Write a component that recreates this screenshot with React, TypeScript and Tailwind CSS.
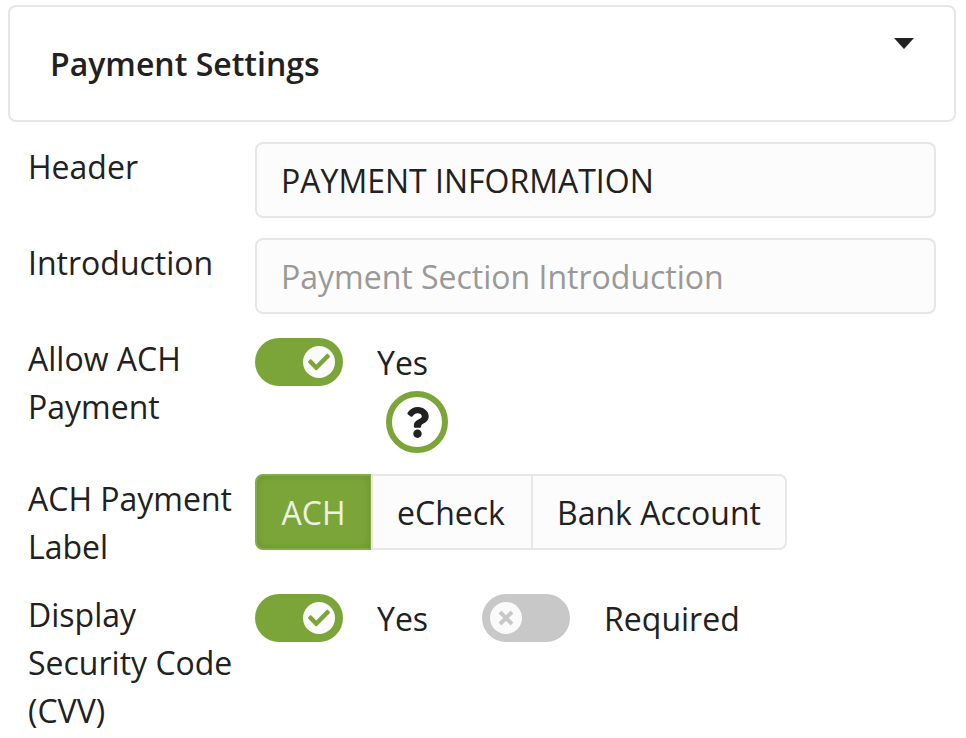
import React from 'react';
import { FaCheck, FaQuestion } from 'react-icons/fa';

const Toggle = ({ on }: { on: boolean }) => {
  if (on) {
    return (
      <div className="w-[88px] h-12 rounded-full bg-[#7ba539] flex items-center justify-end pr-2 shrink-0">
        <div className="w-8 h-8 rounded-full bg-[#fafafa] flex items-center justify-center">
          <FaCheck size={22} color="#7ba539" />
        </div>
      </div>
    );
  }
  return (
    <div className="w-[88px] h-12 rounded-full bg-[#c8c8c8] flex items-center pl-2 shrink-0">
      <div className="w-8 h-8 rounded-full bg-[#fafafa] flex items-center justify-center">
        <svg width="18" height="18" viewBox="0 0 18 18" fill="none">
          <path d="M3 3l12 12M15 3L3 15" stroke="#c8c8c8" strokeWidth="4" />
        </svg>
      </div>
    </div>
  );
};

const Label = ({ children }: { children: React.ReactNode }) => (
  <div className="w-[226px] shrink-0 pt-px">{children}</div>
);

const App = () => {
  return (
    <div className="w-[966px] h-[738px] overflow-hidden bg-white text-[32px] leading-[48px] text-[#212121] font-['Open_Sans',sans-serif]">
      <div className="ml-2 mr-2.5 mt-[5px] h-[117px] border-2 border-[#e6e6e6] rounded-lg flex justify-between pl-[40px] pr-[40px]">
        <div className="font-semibold mt-[33px]">Payment Settings</div>
        <div className="mt-[31px] w-0 h-0 border-x-[10px] border-x-transparent border-t-[11px] border-t-[#212121]" />
      </div>

      <div className="pl-[28px] pr-[30px] pt-5">
        {/* Header */}
        <div className="flex mb-5">
          <Label>Header</Label>
          <div className="ml-px flex-1 h-[76px] border-2 border-[#e6e6e6] rounded-lg bg-[#fcfcfc] px-[24px] pt-px flex items-center">
            PAYMENT INFORMATION
          </div>
        </div>

        {/* Introduction */}
        <div className="flex mb-5">
          <Label>Introduction</Label>
          <div className="ml-px flex-1 h-[76px] border-2 border-[#e6e6e6] rounded-lg bg-[#fcfcfc] px-[24px] pt-px flex items-center text-[#999999]">
            Payment Section Introduction
          </div>
        </div>

        {/* Allow ACH */}
        <div className="flex mb-[21px]">
          <Label>Allow ACH Payment</Label>
          <div className="ml-px pt-[4px]">
            <div className="flex items-start">
              <Toggle on />
              <span className="ml-[34px] mt-[1px]">Yes</span>
            </div>
            <div className="ml-[131px] mt-[4px] w-[62px] h-[62px] rounded-full border-[6px] border-[#7ba539] flex items-center justify-center">
              <FaQuestion size={31} color="#212121" />
            </div>
          </div>
        </div>

        {/* ACH label */}
        <div className="flex mb-[19px]">
          <Label>ACH Payment Label</Label>
          <div className="ml-px flex h-[76px] text-center">
            <div className="w-[117px] border-2 border-[#84ad44] rounded-l-lg bg-[#7ba539] text-[#ecf2e1] shadow-[inset_0_0_8px_rgba(0,0,0,0.12)] flex items-center justify-center pt-px">ACH</div>
            <div className="w-[162px] -ml-px border-2 border-[#e6e6e6] bg-[#fcfcfc] flex items-center justify-center pt-px pr-0.5">eCheck</div>
            <div className="w-[256px] -ml-0.5 border-2 border-[#e6e6e6] rounded-r-lg bg-[#fcfcfc] flex items-center justify-center pt-px">Bank Account</div>
          </div>
        </div>

        {/* CVV */}
        <div className="flex">
          <Label>Display Security Code (CVV)</Label>
          <div className="ml-px flex items-start pt-[4px]">
            <Toggle on />
            <span className="ml-[34px] mt-[1px]">Yes</span>
            <div className="ml-[54px]"><Toggle on={false} /></div>
            <span className="ml-[34px] mt-[1px]">Required</span>
          </div>
        </div>
      </div>
    </div>
  );
};

export default App;
